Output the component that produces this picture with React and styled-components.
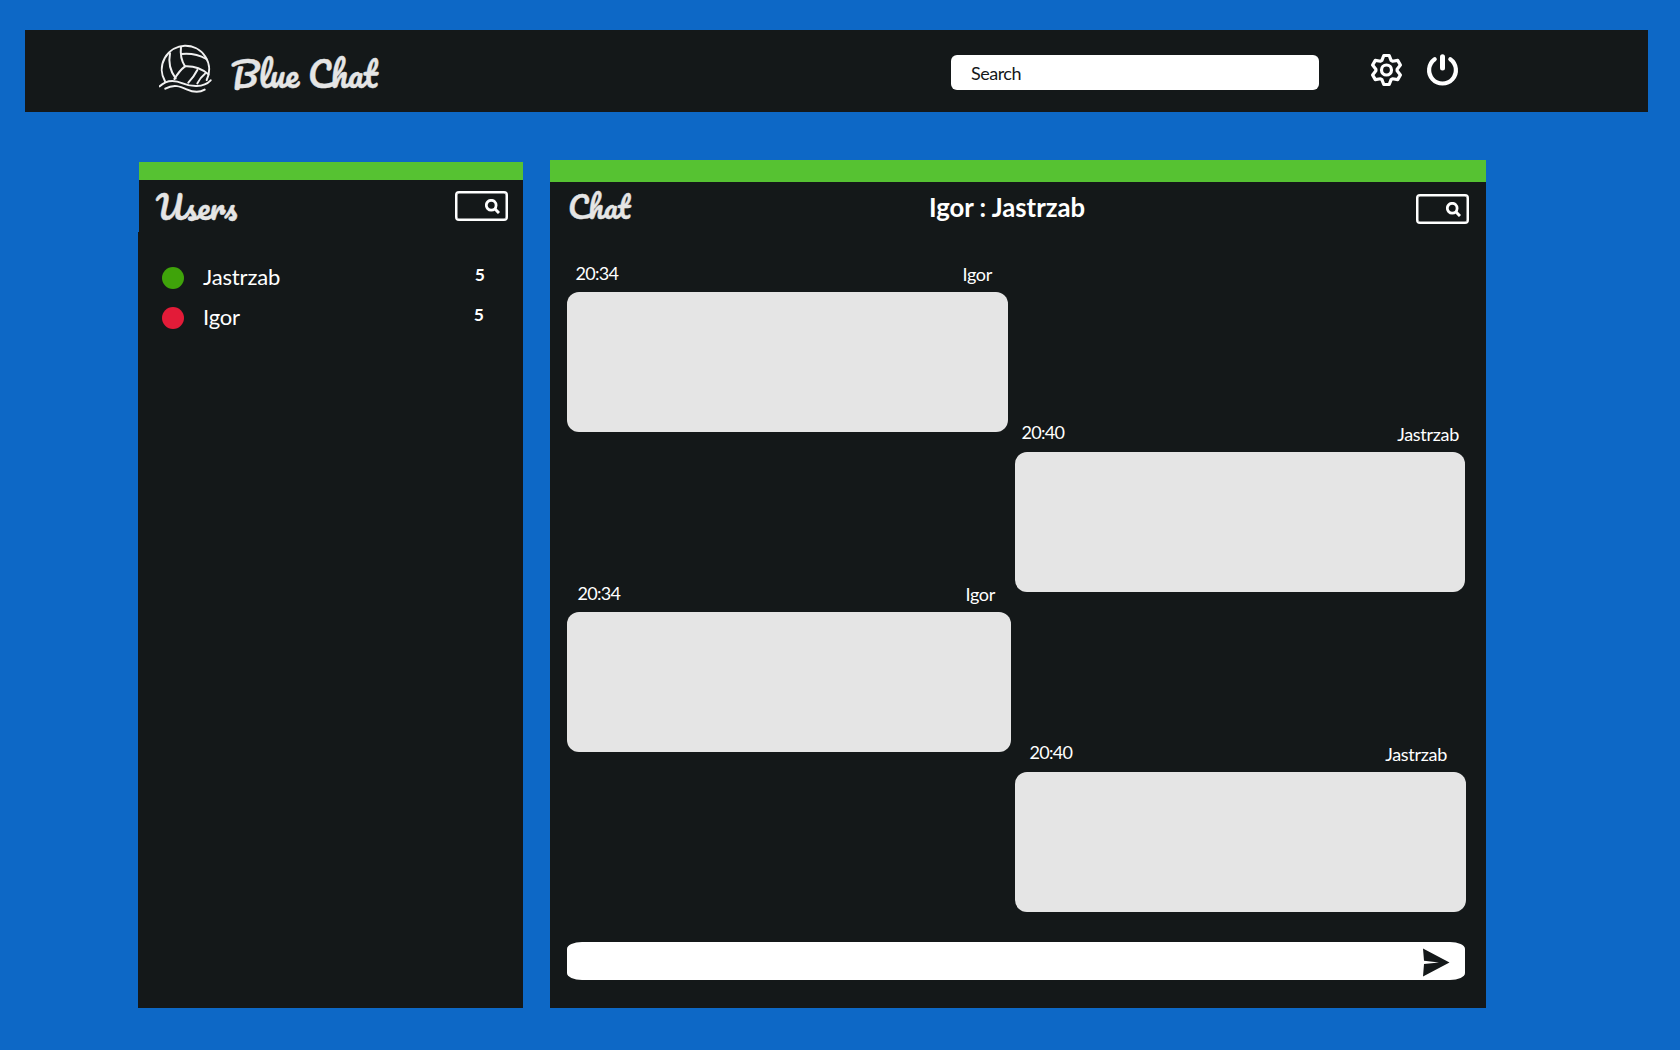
import React from "react";
import styled, { createGlobalStyle } from "styled-components";

const GlobalStyle = createGlobalStyle`
  *, *::before, *::after { box-sizing: border-box; }
  body {
    margin: 0;
    background: #0d68c6;
    color: #fff;
    font-family: Lato, "Liberation Sans", sans-serif;
  }
`;

const Page = styled.div`
  width: 1680px;
  height: 1050px;
  overflow: hidden;
  padding: 30px 32px 42px 25px;
  display: flex;
  flex-direction: column;
  background: #0d68c6;
`;

const Header = styled.header`
  height: 82px;
  flex: none;
  display: flex;
  align-items: flex-start;
  padding: 0 189px 0 134px;
  background: #141819;
`;

const Logo = styled.svg`
  width: 53px;
  height: 49px;
  margin-top: 14px;
  flex: none;
  fill: none;
  stroke: #f1f1f1;
  stroke-width: 6;
  stroke-linecap: round;
`;

const Script = styled.h1`
  margin: 0;
  color: #e5e5e5;
  font-family: Pacifico, Lato, cursive;
  font-weight: 400;
  white-space: nowrap;
  font-size: ${(p) => p.$size}px;
  line-height: 38px;
  -webkit-text-stroke: 0.4px #e5e5e5;
`;

const Brand = styled.div`
  display: flex;
  gap: 19px;
  flex: 1;

  ${Script} { margin-top: 25px; }
`;

const SearchField = styled.div`
  width: 368px;
  height: 35px;
  margin-top: 25px;
  padding: 0 20px;
  border-radius: 6px;
  background: #fff;
  color: #141819;
  font-size: 18px;
  line-height: 36px;
  letter-spacing: -0.5px;
`;

const Actions = styled.div`
  display: flex;
  gap: 23px;
  margin: 23px 0 0 51px;
`;

const ActionIcon = styled.svg`
  width: 33px;
  height: 34px;
  fill: none;
  stroke: #fff;
`;

const Main = styled.main`
  flex: 1;
  display: flex;
  align-items: flex-start;
  gap: 27px;
  padding: 48px 0 0 113px;
`;

const UsersPanel = styled.section`
  width: 385px;
  height: 846px;
  margin-top: 2px;
  display: flex;
  flex-direction: column;
  align-items: flex-end;
`;

const ChatPanel = styled.section`
  width: 936px;
  height: 848px;
  display: flex;
  flex-direction: column;
  background: #141819;
`;

const Strip = styled.div`
  width: ${(p) => p.$width};
  height: ${(p) => p.$height}px;
  flex: none;
  background: #56c232;
`;

const UsersHead = styled.header`
  width: 384px;
  height: 52px;
  flex: none;
  display: flex;
  justify-content: space-between;
  padding: 8px 15px 0 17px;
  background: #141819;
`;

const ChatHead = styled.header`
  height: 90px;
  flex: none;
  display: grid;
  grid-template-columns: 361px 1fr auto;
  align-items: start;
  padding: 6px 17px 0 18px;
`;

const ChatTitle = styled.h2`
  margin: 4px 0 0;
  font-size: 25.7px;
  font-weight: 700;
  line-height: 30px;
`;

const MiniSearch = styled.div`
  width: 53px;
  height: 30px;
  margin-top: ${(p) => p.$top}px;
  display: flex;
  align-items: center;
  justify-content: flex-end;
  padding-right: 6px;
  border: 2px solid #fff;
  border-radius: 4px;
  box-shadow: inset 0 0 0 0.5px #fff;

  svg { width: 15px; height: 15px; fill: none; stroke: #fff; }
`;

const UserList = styled.ul`
  width: 385px;
  flex: 1;
  margin: 0;
  padding: 26px 38px 0 24px;
  list-style: none;
  background: #141819;
`;

const UserRow = styled.li`
  height: 40px;
  display: flex;
  align-items: center;
`;

const Dot = styled.span`
  width: 22px;
  height: 22px;
  border-radius: 50%;
  background: ${(p) => p.$color};
`;

const UserName = styled.span`
  flex: 1;
  padding: 0 0 2px 19px;
  font-size: 22px;
  line-height: 26px;
  letter-spacing: -0.15px;
`;

const Count = styled.span`
  font-size: 17.5px;
  font-weight: 700;
  line-height: 20px;
  padding: 0 ${(p) => p.$inset}px 6px 0;
`;

const Messages = styled.div`
  display: flex;
  flex-direction: column;
  padding-left: 17px;
`;

const Message = styled.article`
  width: ${(p) => p.$width}px;
  margin-left: ${(p) => (p.$own ? 448 : 0)}px;
`;

const MessageHead = styled.div`
  height: 20px;
  display: flex;
  align-items: flex-end;
  justify-content: space-between;
  padding: 0 ${(p) => p.$right}px 0 ${(p) => p.$left}px;
  font-size: 18px;
  line-height: 20px;
`;

const Time = styled.time`
  margin-bottom: ${(p) => p.$lift}px;
  letter-spacing: -0.7px;
`;

const Sender = styled.span`
  margin-bottom: 8px;
  letter-spacing: -0.3px;
`;

const Bubble = styled.div`
  height: 140px;
  border-radius: 12px;
  background: #e5e5e5;
`;

const Composer = styled.div`
  width: 898px;
  height: 38px;
  margin: 30px 0 0 17px;
  display: flex;
  align-items: center;
  justify-content: flex-end;
  padding-right: 15px;
  border-radius: 15px / 7px;
  background: #fff;

  svg { width: 28px; height: 29px; margin-top: 2px; fill: #141819; }
`;

const users = [
  { name: "Jastrzab", color: "#3fa30a", count: 5, inset: 0 },
  { name: "Igor", color: "#e31b38", count: 5, inset: 1 },
];

const messages = [
  { time: "20:34", sender: "Igor", width: 441, left: 8.5, right: 16, lift: 9 },
  { time: "20:40", sender: "Jastrzab", width: 450, left: 6.5, right: 6, lift: 10, own: true },
  { time: "20:34", sender: "Igor", width: 444, left: 10.5, right: 16, lift: 9 },
  { time: "20:40", sender: "Jastrzab", width: 451, left: 14.5, right: 19, lift: 10, own: true },
];

function BallLogo() {
  return (
    <Logo viewBox="57 72 159 147">
      <path d="M75 184 A71 71 0 1 1 200 180" />
      <path d="M90 100 Q82 142 107 175" />
      <path d="M123 80 Q119 115 135 139 Q118 152 103 177" />
      <path d="M125 102 Q165 98 199 117" />
      <path d="M135 139 Q175 137 205 163" />
      <path d="M172 150 Q163 168 145 188" />
      <path d="M195 161 Q181 172 172 190" />
      <path d="M59 199 C80 178 105 180 128 190 C150 199 190 205 212 181" />
      <path d="M76 206 C102 191 122 200 140 208 C158 216 180 217 194 209" />
    </Logo>
  );
}

// Six teeth, the outline of one tooth turned by 60 degrees each time.
const TOOTH = [[-4.6, -9.6], [-2.7, -14.5], [2.7, -14.5], [4.6, -9.6]];

function GearIcon() {
  const points = [];
  for (let i = 0; i < 6; i += 1) {
    const a = (i * Math.PI) / 3;
    TOOTH.forEach(([x, y]) => {
      points.push(
        `${(x * Math.cos(a) - y * Math.sin(a)).toFixed(2)},${(x * Math.sin(a) + y * Math.cos(a)).toFixed(2)}`
      );
    });
  }
  return (
    <ActionIcon viewBox="-16.5 -17 33 34" strokeWidth="3.2" strokeLinejoin="round">
      <polygon points={points.join(" ")} />
      <circle r="5" />
    </ActionIcon>
  );
}

function PowerIcon() {
  return (
    <ActionIcon viewBox="-16.5 -17 33 34" strokeWidth="4.2" strokeLinecap="round">
      <path d="M-7.8 -10.8 A13.4 13.4 0 1 0 7.8 -10.8" />
      <path d="M0 -13.2 V-2" strokeWidth="5" />
    </ActionIcon>
  );
}

function SearchBox({ top }) {
  return (
    <MiniSearch $top={top}>
      <svg viewBox="0 0 15 15">
        <circle cx="6.2" cy="6.2" r="4.9" strokeWidth="2.8" />
        <path d="M9.8 9.8 L14 14" strokeWidth="3" />
      </svg>
    </MiniSearch>
  );
}

export default function App() {
  return (
    <>
      <GlobalStyle />
      <Page>
        <Header>
          <Brand>
            <BallLogo />
            <Script $size={33.6}>Blue Chat</Script>
          </Brand>
          <SearchField>Search</SearchField>
          <Actions>
            <GearIcon />
            <PowerIcon />
          </Actions>
        </Header>
        <Main>
          <UsersPanel>
            <Strip $width="384px" $height={18} />
            <UsersHead>
              <Script as="h2" $size={31.5}>Users</Script>
              <SearchBox top={3} />
            </UsersHead>
            <UserList>
              {users.map((u) => (
                <UserRow key={u.name}>
                  <Dot $color={u.color} />
                  <UserName>{u.name}</UserName>
                  <Count $inset={u.inset}>{u.count}</Count>
                </UserRow>
              ))}
            </UserList>
          </UsersPanel>
          <ChatPanel>
            <Strip $width="100%" $height={22} />
            <ChatHead>
              <Script as="h2" $size={30}>Chat</Script>
              <ChatTitle>Igor : Jastrzab</ChatTitle>
              <SearchBox top={6} />
            </ChatHead>
            <Messages>
              {messages.map((m, i) => (
                <Message key={i} $width={m.width} $own={m.own}>
                  <MessageHead $left={m.left} $right={m.right}>
                    <Time $lift={m.lift}>{m.time}</Time>
                    <Sender>{m.sender}</Sender>
                  </MessageHead>
                  <Bubble />
                </Message>
              ))}
            </Messages>
            <Composer>
              <svg viewBox="0 0 28 29">
                <path d="M1 0.5 L27.5 14.5 L1 28.5 L2 16 L17 14.5 L2 12.8 Z" />
              </svg>
            </Composer>
          </ChatPanel>
        </Main>
      </Page>
    </>
  );
}
